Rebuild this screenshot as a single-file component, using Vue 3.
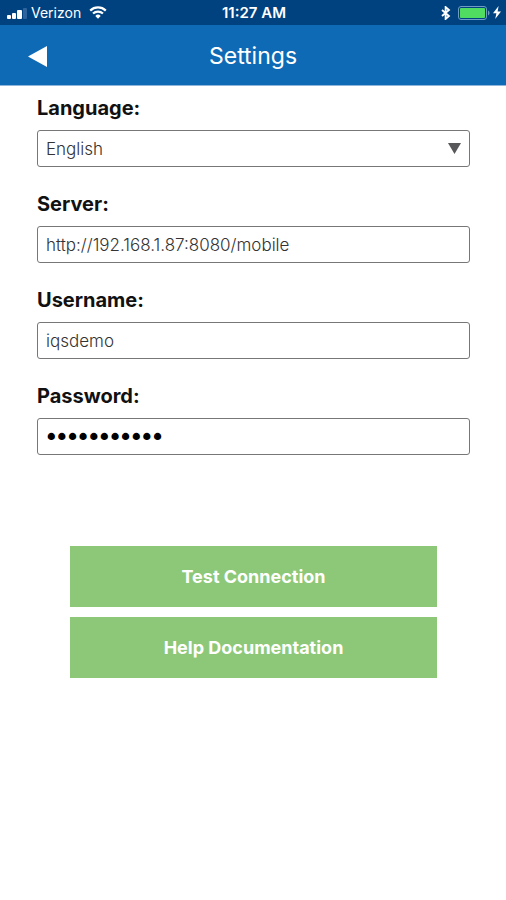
<script setup>
import { ref } from 'vue'

const language = ref('English')
const server = ref('http://192.168.1.87:8080/mobile')
const username = ref('iqsdemo')
const password = ref('iqsdemo1234')
</script>

<template>
  <div class="screen">
    <div class="status">
      <div class="status-side">
        <svg class="signal" width="20" height="12" viewBox="0 0 20 12" aria-hidden="true">
          <rect x="0" y="8" width="4" height="4" rx="1" fill="#fff" />
          <rect x="5" y="6" width="4" height="6" rx="1" fill="#fff" />
          <rect x="10" y="3" width="5" height="9" rx="1" fill="#fff" />
          <rect x="16" y="1" width="4" height="11" rx="1" fill="#2f639b" />
        </svg>
        <span class="carrier">Verizon</span>
        <svg class="wifi" width="18" height="13" viewBox="0 0 18 13" aria-hidden="true">
          <path d="M1.2 4.6a11.2 11.2 0 0 1 15.6 0" fill="none" stroke="#fff" stroke-width="2.2" />
          <path d="M4 7.6a7.2 7.2 0 0 1 10 0" fill="none" stroke="#fff" stroke-width="2.1" />
          <path d="M6.3 9.9a3.9 3.9 0 0 1 5.4 0L9 12.8z" fill="#fff" />
        </svg>
      </div>
      <span class="clock">11:27 AM</span>
      <div class="status-side end">
        <svg width="10" height="14" viewBox="0 0 10 14" aria-hidden="true">
          <path d="M1 4l7 6-3.4 3V1L8 4l-7 6" fill="none" stroke="#fff" stroke-width="1.8" />
        </svg>
        <svg class="battery" width="32" height="14" viewBox="0 0 32 14" aria-hidden="true">
          <rect x=".5" y=".5" width="28" height="13" rx="2.5" fill="none" stroke="#6f9cc4" />
          <rect x="2" y="2" width="25" height="10" rx="1" fill="#4fdc61" />
          <path d="M30 4.5c2 .8 2 4.2 0 5z" fill="#6f9cc4" />
        </svg>
        <svg class="bolt" width="8" height="13" viewBox="0 0 8 13" aria-hidden="true">
          <path d="M5.6 0L0 7.3h3.4L2.2 13 8 5.4H4.6z" fill="#fff" />
        </svg>
      </div>
    </div>

    <header class="bar">
      <button class="back" type="button" aria-label="Back">
        <svg width="19" height="21" viewBox="0 0 19 21" aria-hidden="true">
          <path d="M0 10.5L19 0v21z" fill="#fff" />
        </svg>
      </button>
      <h1>Settings</h1>
    </header>

    <form class="form" @submit.prevent>
      <div class="field">
        <label for="language">Language:</label>
        <div class="select-wrap">
          <select id="language" v-model="language" class="control">
            <option>English</option>
          </select>
          <svg class="caret" width="13" height="11" viewBox="0 0 13 11" aria-hidden="true">
            <path d="M0 0h13L6.5 11z" fill="#58585a" />
          </svg>
        </div>
      </div>
      <div class="field">
        <label for="server">Server:</label>
        <input id="server" v-model="server" class="control" type="text" />
      </div>
      <div class="field">
        <label for="username">Username:</label>
        <input id="username" v-model="username" class="control" type="text" />
      </div>
      <div class="field">
        <label for="password">Password:</label>
        <input id="password" v-model="password" class="control secret" type="password" />
      </div>
      <div class="actions">
        <button type="button">Test Connection</button>
        <button type="button">Help Documentation</button>
      </div>
    </form>
  </div>
</template>

<style>
body {
  margin: 0;
  background: #fff;
}
</style>

<style scoped>
.screen {
  min-height: 100vh;
  background: #fff;
  color: #111;
  font-family: Inter, "Liberation Sans", sans-serif;
}

.status {
  display: grid;
  grid-template-columns: 1fr auto 1fr;
  align-items: center;
  height: 25px;
  padding: 0 5px 0 7px;
  background: #00427f;
  color: #fff;
  font-size: 14px;
}

.status-side {
  display: flex;
  align-items: center;
}

.end {
  justify-content: flex-end;
}

.carrier {
  margin: 0 8px 0 4px;
}

.clock {
  font-size: 15px;
  font-weight: 600;
}

.battery {
  margin: 0 3px 0 7px;
}

.bar {
  display: grid;
  grid-template-columns: 1fr auto 1fr;
  align-items: center;
  height: 61px;
  padding: 2px 28px 0;
  box-sizing: border-box;
  border-bottom: 1px solid #8fb5dc;
  background: #0f6ab6;
  color: #fff;
}

.back {
  display: flex;
  justify-self: start;
  padding: 0;
  border: 0;
  background: none;
}

h1 {
  margin: 0;
  font-size: 23px;
  font-weight: 400;
}

.form {
  display: flex;
  flex-direction: column;
  gap: 25px;
  padding: 10px 36px 24px 37px;
}

.field {
  display: flex;
  flex-direction: column;
  gap: 10px;
}

label {
  font-size: 20px;
  font-weight: 700;
  line-height: 24px;
}

.select-wrap {
  display: grid;
  align-items: center;
}

.select-wrap > * {
  grid-area: 1 / 1;
}

.caret {
  justify-self: end;
  margin-right: 9px;
  pointer-events: none;
}

.control {
  width: 100%;
  height: 37px;
  margin: 0;
  padding: 0 8px;
  box-sizing: border-box;
  border: 1px solid #777;
  border-radius: 3px;
  appearance: none;
  background: #fff;
  color: #333;
  font-family: inherit;
  font-size: 17px;
  font-weight: 300;
}

.secret {
  color: #000;
  font-family: "DejaVu Sans", sans-serif;
  font-size: 18px;
  font-weight: 400;
  -webkit-text-stroke: 2px #000;
}

.actions {
  display: flex;
  flex-direction: column;
  gap: 10px;
  padding: 66px 33px 0;
}

.actions button {
  height: 61px;
  padding: 0;
  border: 0;
  background: #8dc878;
  color: #fff;
  font-family: inherit;
  font-size: 18px;
  font-weight: 700;
}
</style>
